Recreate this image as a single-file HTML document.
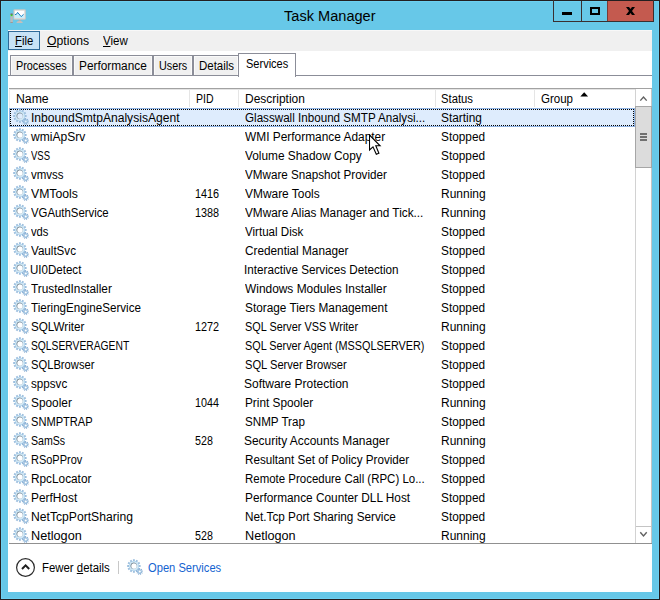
<!DOCTYPE html>
<html><head><meta charset="utf-8"><title>Task Manager</title>
<style>
*{box-sizing:border-box;margin:0;padding:0}
html,body{width:660px;height:600px;overflow:hidden}
body{background:#67c8e8;font-family:"Liberation Sans",sans-serif;font-size:12px;color:#000;position:relative}
.a{position:absolute}
.t{position:absolute;display:inline-block;white-space:nowrap;transform-origin:0 50%}
u{text-decoration:underline;text-underline-offset:1px;text-decoration-thickness:1px}
.tab{position:absolute;top:55px;height:20px;background:#f0f0f0;border:1px solid #8b8d98;border-bottom:none;box-shadow:inset 1px 1px 0 #fafafa,inset -1px 0 0 #fafafa}
.tab.act{top:53px;height:24px;background:#fff;box-shadow:none}
.vs{position:absolute;top:89px;width:1px;height:18px;background:#e5e5e5}
.g{position:absolute;left:13px;width:16px;height:16px}
</style></head><body>

<svg width="0" height="0" style="position:absolute">
<defs>
<radialGradient id="gg" cx="0.5" cy="0.5" r="0.5">
<stop offset="0.6" stop-color="#e3f4fc"/><stop offset="0.85" stop-color="#cbe7f6"/><stop offset="1" stop-color="#b3d5ee"/>
</radialGradient>
<linearGradient id="gr" x1="0" y1="0" x2="1" y2="1">
<stop offset="0" stop-color="#4c5761"/><stop offset="0.5" stop-color="#93a5b5"/><stop offset="1" stop-color="#e6f3fb"/>
</linearGradient>
</defs></svg>
<div class="a" style="left:0;top:0;width:660px;height:600px;border:1px solid #231f20"></div>
<div class="a" style="left:1px;top:1px;width:658px;height:598px;border:1px solid #6cd0f1"></div>
<svg class="a" style="left:9px;top:8px" width="18" height="16" viewBox="9 8 18 16">
<rect x="10.4" y="13.6" width="2.4" height="9.3" rx="0.8" fill="#bdbaba"/>
<rect x="10.6" y="13.6" width="2" height="1.2" fill="#5a4a5a"/>
<rect x="10.7" y="14.6" width="1.8" height="1.5" fill="#2fe01f"/>
<rect x="10.4" y="22" width="2.4" height="0.9" fill="#9d9390"/>
<rect x="18.6" y="19.4" width="2.2" height="2.2" fill="#b5b0ad"/>
<path d="M16.4 23 Q16.6 21.2 19 21.1 L20.4 21.1 Q22.6 21.2 22.8 23Z" fill="#c4bfbc"/>
<rect x="13.4" y="9.3" width="12.4" height="10.4" rx="1.3" fill="#cbc7c4"/>
<rect x="14.1" y="10" width="11" height="9" rx="0.8" fill="#ddd9d6"/>
<rect x="14.9" y="10.8" width="9.3" height="7.1" fill="#fff"/>
<path d="M14.9 14.6 L16.4 14.3 L17.6 12.4 L21.2 16.6 L23.5 14.4 L24.2 14.4 L24.2 17.9 L14.9 17.9Z" fill="#c6eefb"/>
<path d="M14.9 14.6 L16.4 14.3 L17.6 12.4 L21.2 16.6 L23.6 14.3" fill="none" stroke="#1b7fc2" stroke-width="1"/>
</svg>
<span class="t" style="left:283.64px;top:6px;line-height:20px;transform:scaleX(0.9407);font-size:15.5px">Task Manager</span>
<div class="a" style="left:553px;top:0;width:101px;height:22px;border:1px solid #3a2f30;border-top:none"></div>
<div class="a" style="left:581px;top:1px;width:1px;height:20px;background:#3a2f30"></div>
<div class="a" style="left:608px;top:1px;width:45px;height:20px;background:#c45a4f"></div>
<div class="a" style="left:607px;top:1px;width:1px;height:20px;background:#7a3a36"></div>
<div class="a" style="left:562px;top:12px;width:10px;height:3px;background:#000"></div>
<div class="a" style="left:590px;top:7px;width:10px;height:8px;border:2px solid #000"></div>
<svg class="a" style="left:625px;top:6px" width="11" height="10" viewBox="625 6 11 10"><path d="M626 7 L629 7 L630.5 9 L632 7 L635 7 L632 11 L635 15 L632 15 L630.5 13 L629 15 L626 15 L629 11Z" fill="#000"/></svg>

<div class="a" style="left:8px;top:30px;width:644px;height:562px;background:#fff"></div>
<div class="a" style="left:8px;top:30px;width:644px;height:21px;background:#f0f0f0"></div>
<div class="a" style="left:8px;top:30px;width:644px;height:1px;background:#f8f8f8"></div>
<div class="a" style="left:8px;top:31px;width:32px;height:19px;background:#c8e3f6;border:1px solid #2f6a98"></div>
<span class="t" style="left:15.18px;top:33px;line-height:17px;transform:scaleX(0.9425);"><u>F</u>ile</span>
<span class="t" style="left:47.15px;top:33px;line-height:17px;transform:scaleX(1.0169);"><u>O</u>ptions</span>
<span class="t" style="left:103.20px;top:33px;line-height:17px;transform:scaleX(0.9591);"><u>V</u>iew</span>
<div class="a" style="left:8px;top:75px;width:644px;height:1px;background:#8b8d98"></div>
<div class="tab" style="left:10px;width:63px"></div>
<span class="t" style="left:16.11px;top:57px;line-height:19px;transform:scaleX(0.9031);">Processes</span>
<div class="tab" style="left:73px;width:80px"></div>
<span class="t" style="left:79.44px;top:57px;line-height:19px;transform:scaleX(0.9864);">Performance</span>
<div class="tab" style="left:153px;width:40px"></div>
<span class="t" style="left:159.36px;top:57px;line-height:19px;transform:scaleX(0.8990);">Users</span>
<div class="tab" style="left:193px;width:46px"></div>
<span class="t" style="left:199.47px;top:57px;line-height:19px;transform:scaleX(0.9564);">Details</span>
<div class="tab act" style="left:238px;width:58px"></div>
<span class="t" style="left:246.27px;top:55px;line-height:19px;transform:scaleX(0.9180);">Services</span>
<div class="a" style="left:9px;top:88px;width:643px;height:1px;background:#a2a2a2"></div>
<div class="a" style="left:9px;top:89px;width:627px;height:1px;background:#e4e4e4"></div>
<div class="a" style="left:9px;top:543px;width:643px;height:1px;background:#909090"></div>
<div class="a" style="left:9px;top:89px;width:1px;height:19px;background:#ececec"></div>
<div class="a" style="left:9px;top:108px;width:1px;height:435px;background:#f7f7f7"></div>
<div class="vs" style="left:189px"></div>
<div class="vs" style="left:238px"></div>
<div class="vs" style="left:435px"></div>
<div class="vs" style="left:534px"></div>
<span class="t" style="left:15.51px;top:90px;line-height:19px;transform:scaleX(1.0209);">Name</span>
<span class="t" style="left:195.54px;top:90px;line-height:19px;transform:scaleX(0.8754);">PID</span>
<span class="t" style="left:245.43px;top:90px;line-height:19px;transform:scaleX(0.9973);">Description</span>
<span class="t" style="left:441.15px;top:90px;line-height:19px;transform:scaleX(0.9400);">Status</span>
<span class="t" style="left:541.42px;top:90px;line-height:19px;transform:scaleX(0.9589);">Group</span>
<svg class="a" style="left:580px;top:92px" width="9" height="5" viewBox="0 0 9 5"><path d="M0.3 4.4 L4.2 0.3 L8.1 4.4Z" fill="#000"/></svg>
<div class="a" style="left:9px;top:108px;width:626px;height:19px;background:#deecfd;border:1px solid #8fb3e3"></div>
<div class="a" style="left:10px;top:109px;width:624px;height:17px;border:1px dotted #000"></div>
<div class="a" style="left:8px;top:108px;width:627px;height:435px;overflow:hidden">
<svg class="g" style="left:5px;top:1px" viewBox="0 0 16 16"><path fill-rule="evenodd" d="M6.0 2.5 L5.9 0.3 L7.9 0.3 L7.8 2.5 L8.4 2.6 L9.4 0.7 L11.1 1.7 L9.9 3.5 L10.4 4.0 L12.2 2.8 L13.2 4.5 L11.3 5.5 L11.4 6.1 L13.6 6.0 L13.6 8.0 L11.4 7.9 L11.3 8.5 L13.2 9.5 L12.2 11.2 L10.4 10.0 L9.9 10.5 L11.1 12.3 L9.4 13.3 L8.4 11.4 L7.8 11.5 L7.9 13.7 L5.9 13.7 L6.0 11.5 L5.4 11.4 L4.4 13.3 L2.7 12.3 L3.9 10.5 L3.4 10.0 L1.6 11.2 L0.6 9.5 L2.5 8.5 L2.4 7.9 L0.2 8.0 L0.2 6.0 L2.4 6.1 L2.5 5.5 L0.6 4.5 L1.6 2.8 L3.4 4.0 L3.9 3.5 L2.7 1.7 L4.4 0.7 L5.4 2.6Z M10 7 A3.1 3.1 0 1 0 3.8 7 A3.1 3.1 0 1 0 10 7Z" fill="#9dbfde"/><path fill-rule="evenodd" d="M11.9 7 A5 5 0 1 0 1.9 7 A5 5 0 1 0 11.9 7Z M10 7 A3.1 3.1 0 1 0 3.8 7 A3.1 3.1 0 1 0 10 7Z" fill="url(#gg)"/><circle cx="6.9" cy="7" r="3.1" fill="none" stroke="url(#gr)" stroke-width="0.8"/><path fill-rule="evenodd" d="M12.3 10.5 L12.3 9.2 L13.1 9.2 L13.1 10.5 L13.7 10.8 L14.6 9.7 L15.2 10.3 L14.3 11.3 L14.7 11.9 L16.0 11.6 L16.1 12.4 L14.8 12.6 L14.7 13.3 L15.8 13.9 L15.4 14.6 L14.3 14.0 L13.8 14.4 L14.2 15.6 L13.5 15.9 L13.0 14.7 L12.4 14.7 L11.9 15.9 L11.2 15.6 L11.6 14.4 L11.1 14.0 L10.0 14.6 L9.6 13.9 L10.7 13.3 L10.6 12.6 L9.3 12.4 L9.4 11.6 L10.7 11.9 L11.1 11.3 L10.2 10.3 L10.8 9.7 L11.7 10.8Z M13.95 12.6 A1.25 1.25 0 1 0 11.45 12.6 A1.25 1.25 0 1 0 13.95 12.6Z" fill="#7ba3cc"/><path fill-rule="evenodd" d="M14.9 12.6 A2.2 2.2 0 1 0 10.5 12.6 A2.2 2.2 0 1 0 14.9 12.6Z M13.95 12.6 A1.25 1.25 0 1 0 11.45 12.6 A1.25 1.25 0 1 0 13.95 12.6Z" fill="#a9cbe6"/></svg>
<span class="t" style="left:23.27px;top:1px;line-height:19px;transform:scaleX(1.0075)">InboundSmtpAnalysisAgent</span>
<span class="t" style="left:236.92px;top:1px;line-height:19px;transform:scaleX(0.9698)">Glasswall Inbound SMTP Analysi...</span>
<span class="t" style="left:433.10px;top:1px;line-height:19px;transform:scaleX(0.9882)">Starting</span>
<svg class="g" style="left:5px;top:20px" viewBox="0 0 16 16"><path fill-rule="evenodd" d="M6.0 2.5 L5.9 0.3 L7.9 0.3 L7.8 2.5 L8.4 2.6 L9.4 0.7 L11.1 1.7 L9.9 3.5 L10.4 4.0 L12.2 2.8 L13.2 4.5 L11.3 5.5 L11.4 6.1 L13.6 6.0 L13.6 8.0 L11.4 7.9 L11.3 8.5 L13.2 9.5 L12.2 11.2 L10.4 10.0 L9.9 10.5 L11.1 12.3 L9.4 13.3 L8.4 11.4 L7.8 11.5 L7.9 13.7 L5.9 13.7 L6.0 11.5 L5.4 11.4 L4.4 13.3 L2.7 12.3 L3.9 10.5 L3.4 10.0 L1.6 11.2 L0.6 9.5 L2.5 8.5 L2.4 7.9 L0.2 8.0 L0.2 6.0 L2.4 6.1 L2.5 5.5 L0.6 4.5 L1.6 2.8 L3.4 4.0 L3.9 3.5 L2.7 1.7 L4.4 0.7 L5.4 2.6Z M10 7 A3.1 3.1 0 1 0 3.8 7 A3.1 3.1 0 1 0 10 7Z" fill="#9dbfde"/><path fill-rule="evenodd" d="M11.9 7 A5 5 0 1 0 1.9 7 A5 5 0 1 0 11.9 7Z M10 7 A3.1 3.1 0 1 0 3.8 7 A3.1 3.1 0 1 0 10 7Z" fill="url(#gg)"/><circle cx="6.9" cy="7" r="3.1" fill="none" stroke="url(#gr)" stroke-width="0.8"/><path fill-rule="evenodd" d="M12.3 10.5 L12.3 9.2 L13.1 9.2 L13.1 10.5 L13.7 10.8 L14.6 9.7 L15.2 10.3 L14.3 11.3 L14.7 11.9 L16.0 11.6 L16.1 12.4 L14.8 12.6 L14.7 13.3 L15.8 13.9 L15.4 14.6 L14.3 14.0 L13.8 14.4 L14.2 15.6 L13.5 15.9 L13.0 14.7 L12.4 14.7 L11.9 15.9 L11.2 15.6 L11.6 14.4 L11.1 14.0 L10.0 14.6 L9.6 13.9 L10.7 13.3 L10.6 12.6 L9.3 12.4 L9.4 11.6 L10.7 11.9 L11.1 11.3 L10.2 10.3 L10.8 9.7 L11.7 10.8Z M13.95 12.6 A1.25 1.25 0 1 0 11.45 12.6 A1.25 1.25 0 1 0 13.95 12.6Z" fill="#7ba3cc"/><path fill-rule="evenodd" d="M14.9 12.6 A2.2 2.2 0 1 0 10.5 12.6 A2.2 2.2 0 1 0 14.9 12.6Z M13.95 12.6 A1.25 1.25 0 1 0 11.45 12.6 A1.25 1.25 0 1 0 13.95 12.6Z" fill="#a9cbe6"/></svg>
<span class="t" style="left:23.35px;top:20px;line-height:19px;transform:scaleX(1.0050)">wmiApSrv</span>
<span class="t" style="left:237.34px;top:20px;line-height:19px;transform:scaleX(0.9915)">WMI Performance Adapter</span>
<span class="t" style="left:433.11px;top:20px;line-height:19px;transform:scaleX(0.9846)">Stopped</span>
<svg class="g" style="left:5px;top:39px" viewBox="0 0 16 16"><path fill-rule="evenodd" d="M6.0 2.5 L5.9 0.3 L7.9 0.3 L7.8 2.5 L8.4 2.6 L9.4 0.7 L11.1 1.7 L9.9 3.5 L10.4 4.0 L12.2 2.8 L13.2 4.5 L11.3 5.5 L11.4 6.1 L13.6 6.0 L13.6 8.0 L11.4 7.9 L11.3 8.5 L13.2 9.5 L12.2 11.2 L10.4 10.0 L9.9 10.5 L11.1 12.3 L9.4 13.3 L8.4 11.4 L7.8 11.5 L7.9 13.7 L5.9 13.7 L6.0 11.5 L5.4 11.4 L4.4 13.3 L2.7 12.3 L3.9 10.5 L3.4 10.0 L1.6 11.2 L0.6 9.5 L2.5 8.5 L2.4 7.9 L0.2 8.0 L0.2 6.0 L2.4 6.1 L2.5 5.5 L0.6 4.5 L1.6 2.8 L3.4 4.0 L3.9 3.5 L2.7 1.7 L4.4 0.7 L5.4 2.6Z M10 7 A3.1 3.1 0 1 0 3.8 7 A3.1 3.1 0 1 0 10 7Z" fill="#9dbfde"/><path fill-rule="evenodd" d="M11.9 7 A5 5 0 1 0 1.9 7 A5 5 0 1 0 11.9 7Z M10 7 A3.1 3.1 0 1 0 3.8 7 A3.1 3.1 0 1 0 10 7Z" fill="url(#gg)"/><circle cx="6.9" cy="7" r="3.1" fill="none" stroke="url(#gr)" stroke-width="0.8"/><path fill-rule="evenodd" d="M12.3 10.5 L12.3 9.2 L13.1 9.2 L13.1 10.5 L13.7 10.8 L14.6 9.7 L15.2 10.3 L14.3 11.3 L14.7 11.9 L16.0 11.6 L16.1 12.4 L14.8 12.6 L14.7 13.3 L15.8 13.9 L15.4 14.6 L14.3 14.0 L13.8 14.4 L14.2 15.6 L13.5 15.9 L13.0 14.7 L12.4 14.7 L11.9 15.9 L11.2 15.6 L11.6 14.4 L11.1 14.0 L10.0 14.6 L9.6 13.9 L10.7 13.3 L10.6 12.6 L9.3 12.4 L9.4 11.6 L10.7 11.9 L11.1 11.3 L10.2 10.3 L10.8 9.7 L11.7 10.8Z M13.95 12.6 A1.25 1.25 0 1 0 11.45 12.6 A1.25 1.25 0 1 0 13.95 12.6Z" fill="#7ba3cc"/><path fill-rule="evenodd" d="M14.9 12.6 A2.2 2.2 0 1 0 10.5 12.6 A2.2 2.2 0 1 0 14.9 12.6Z M13.95 12.6 A1.25 1.25 0 1 0 11.45 12.6 A1.25 1.25 0 1 0 13.95 12.6Z" fill="#a9cbe6"/></svg>
<span class="t" style="left:23.33px;top:39px;line-height:19px;transform:scaleX(0.7913)">VSS</span>
<span class="t" style="left:237.29px;top:39px;line-height:19px;transform:scaleX(0.9884)">Volume Shadow Copy</span>
<span class="t" style="left:433.11px;top:39px;line-height:19px;transform:scaleX(0.9846)">Stopped</span>
<svg class="g" style="left:5px;top:58px" viewBox="0 0 16 16"><path fill-rule="evenodd" d="M6.0 2.5 L5.9 0.3 L7.9 0.3 L7.8 2.5 L8.4 2.6 L9.4 0.7 L11.1 1.7 L9.9 3.5 L10.4 4.0 L12.2 2.8 L13.2 4.5 L11.3 5.5 L11.4 6.1 L13.6 6.0 L13.6 8.0 L11.4 7.9 L11.3 8.5 L13.2 9.5 L12.2 11.2 L10.4 10.0 L9.9 10.5 L11.1 12.3 L9.4 13.3 L8.4 11.4 L7.8 11.5 L7.9 13.7 L5.9 13.7 L6.0 11.5 L5.4 11.4 L4.4 13.3 L2.7 12.3 L3.9 10.5 L3.4 10.0 L1.6 11.2 L0.6 9.5 L2.5 8.5 L2.4 7.9 L0.2 8.0 L0.2 6.0 L2.4 6.1 L2.5 5.5 L0.6 4.5 L1.6 2.8 L3.4 4.0 L3.9 3.5 L2.7 1.7 L4.4 0.7 L5.4 2.6Z M10 7 A3.1 3.1 0 1 0 3.8 7 A3.1 3.1 0 1 0 10 7Z" fill="#9dbfde"/><path fill-rule="evenodd" d="M11.9 7 A5 5 0 1 0 1.9 7 A5 5 0 1 0 11.9 7Z M10 7 A3.1 3.1 0 1 0 3.8 7 A3.1 3.1 0 1 0 10 7Z" fill="url(#gg)"/><circle cx="6.9" cy="7" r="3.1" fill="none" stroke="url(#gr)" stroke-width="0.8"/><path fill-rule="evenodd" d="M12.3 10.5 L12.3 9.2 L13.1 9.2 L13.1 10.5 L13.7 10.8 L14.6 9.7 L15.2 10.3 L14.3 11.3 L14.7 11.9 L16.0 11.6 L16.1 12.4 L14.8 12.6 L14.7 13.3 L15.8 13.9 L15.4 14.6 L14.3 14.0 L13.8 14.4 L14.2 15.6 L13.5 15.9 L13.0 14.7 L12.4 14.7 L11.9 15.9 L11.2 15.6 L11.6 14.4 L11.1 14.0 L10.0 14.6 L9.6 13.9 L10.7 13.3 L10.6 12.6 L9.3 12.4 L9.4 11.6 L10.7 11.9 L11.1 11.3 L10.2 10.3 L10.8 9.7 L11.7 10.8Z M13.95 12.6 A1.25 1.25 0 1 0 11.45 12.6 A1.25 1.25 0 1 0 13.95 12.6Z" fill="#7ba3cc"/><path fill-rule="evenodd" d="M14.9 12.6 A2.2 2.2 0 1 0 10.5 12.6 A2.2 2.2 0 1 0 14.9 12.6Z M13.95 12.6 A1.25 1.25 0 1 0 11.45 12.6 A1.25 1.25 0 1 0 13.95 12.6Z" fill="#a9cbe6"/></svg>
<span class="t" style="left:23.31px;top:58px;line-height:19px;transform:scaleX(0.9591)">vmvss</span>
<span class="t" style="left:237.30px;top:58px;line-height:19px;transform:scaleX(0.9713)">VMware Snapshot Provider</span>
<span class="t" style="left:433.11px;top:58px;line-height:19px;transform:scaleX(0.9846)">Stopped</span>
<svg class="g" style="left:5px;top:77px" viewBox="0 0 16 16"><path fill-rule="evenodd" d="M6.0 2.5 L5.9 0.3 L7.9 0.3 L7.8 2.5 L8.4 2.6 L9.4 0.7 L11.1 1.7 L9.9 3.5 L10.4 4.0 L12.2 2.8 L13.2 4.5 L11.3 5.5 L11.4 6.1 L13.6 6.0 L13.6 8.0 L11.4 7.9 L11.3 8.5 L13.2 9.5 L12.2 11.2 L10.4 10.0 L9.9 10.5 L11.1 12.3 L9.4 13.3 L8.4 11.4 L7.8 11.5 L7.9 13.7 L5.9 13.7 L6.0 11.5 L5.4 11.4 L4.4 13.3 L2.7 12.3 L3.9 10.5 L3.4 10.0 L1.6 11.2 L0.6 9.5 L2.5 8.5 L2.4 7.9 L0.2 8.0 L0.2 6.0 L2.4 6.1 L2.5 5.5 L0.6 4.5 L1.6 2.8 L3.4 4.0 L3.9 3.5 L2.7 1.7 L4.4 0.7 L5.4 2.6Z M10 7 A3.1 3.1 0 1 0 3.8 7 A3.1 3.1 0 1 0 10 7Z" fill="#9dbfde"/><path fill-rule="evenodd" d="M11.9 7 A5 5 0 1 0 1.9 7 A5 5 0 1 0 11.9 7Z M10 7 A3.1 3.1 0 1 0 3.8 7 A3.1 3.1 0 1 0 10 7Z" fill="url(#gg)"/><circle cx="6.9" cy="7" r="3.1" fill="none" stroke="url(#gr)" stroke-width="0.8"/><path fill-rule="evenodd" d="M12.3 10.5 L12.3 9.2 L13.1 9.2 L13.1 10.5 L13.7 10.8 L14.6 9.7 L15.2 10.3 L14.3 11.3 L14.7 11.9 L16.0 11.6 L16.1 12.4 L14.8 12.6 L14.7 13.3 L15.8 13.9 L15.4 14.6 L14.3 14.0 L13.8 14.4 L14.2 15.6 L13.5 15.9 L13.0 14.7 L12.4 14.7 L11.9 15.9 L11.2 15.6 L11.6 14.4 L11.1 14.0 L10.0 14.6 L9.6 13.9 L10.7 13.3 L10.6 12.6 L9.3 12.4 L9.4 11.6 L10.7 11.9 L11.1 11.3 L10.2 10.3 L10.8 9.7 L11.7 10.8Z M13.95 12.6 A1.25 1.25 0 1 0 11.45 12.6 A1.25 1.25 0 1 0 13.95 12.6Z" fill="#7ba3cc"/><path fill-rule="evenodd" d="M14.9 12.6 A2.2 2.2 0 1 0 10.5 12.6 A2.2 2.2 0 1 0 14.9 12.6Z M13.95 12.6 A1.25 1.25 0 1 0 11.45 12.6 A1.25 1.25 0 1 0 13.95 12.6Z" fill="#a9cbe6"/></svg>
<span class="t" style="left:23.29px;top:77px;line-height:19px;transform:scaleX(1.0205)">VMTools</span>
<span class="t" style="left:186.96px;top:77px;line-height:19px;transform:scaleX(0.9044)">1416</span>
<span class="t" style="left:237.29px;top:77px;line-height:19px;transform:scaleX(0.9938)">VMware Tools</span>
<span class="t" style="left:433.23px;top:77px;line-height:19px;transform:scaleX(0.9995)">Running</span>
<svg class="g" style="left:5px;top:96px" viewBox="0 0 16 16"><path fill-rule="evenodd" d="M6.0 2.5 L5.9 0.3 L7.9 0.3 L7.8 2.5 L8.4 2.6 L9.4 0.7 L11.1 1.7 L9.9 3.5 L10.4 4.0 L12.2 2.8 L13.2 4.5 L11.3 5.5 L11.4 6.1 L13.6 6.0 L13.6 8.0 L11.4 7.9 L11.3 8.5 L13.2 9.5 L12.2 11.2 L10.4 10.0 L9.9 10.5 L11.1 12.3 L9.4 13.3 L8.4 11.4 L7.8 11.5 L7.9 13.7 L5.9 13.7 L6.0 11.5 L5.4 11.4 L4.4 13.3 L2.7 12.3 L3.9 10.5 L3.4 10.0 L1.6 11.2 L0.6 9.5 L2.5 8.5 L2.4 7.9 L0.2 8.0 L0.2 6.0 L2.4 6.1 L2.5 5.5 L0.6 4.5 L1.6 2.8 L3.4 4.0 L3.9 3.5 L2.7 1.7 L4.4 0.7 L5.4 2.6Z M10 7 A3.1 3.1 0 1 0 3.8 7 A3.1 3.1 0 1 0 10 7Z" fill="#9dbfde"/><path fill-rule="evenodd" d="M11.9 7 A5 5 0 1 0 1.9 7 A5 5 0 1 0 11.9 7Z M10 7 A3.1 3.1 0 1 0 3.8 7 A3.1 3.1 0 1 0 10 7Z" fill="url(#gg)"/><circle cx="6.9" cy="7" r="3.1" fill="none" stroke="url(#gr)" stroke-width="0.8"/><path fill-rule="evenodd" d="M12.3 10.5 L12.3 9.2 L13.1 9.2 L13.1 10.5 L13.7 10.8 L14.6 9.7 L15.2 10.3 L14.3 11.3 L14.7 11.9 L16.0 11.6 L16.1 12.4 L14.8 12.6 L14.7 13.3 L15.8 13.9 L15.4 14.6 L14.3 14.0 L13.8 14.4 L14.2 15.6 L13.5 15.9 L13.0 14.7 L12.4 14.7 L11.9 15.9 L11.2 15.6 L11.6 14.4 L11.1 14.0 L10.0 14.6 L9.6 13.9 L10.7 13.3 L10.6 12.6 L9.3 12.4 L9.4 11.6 L10.7 11.9 L11.1 11.3 L10.2 10.3 L10.8 9.7 L11.7 10.8Z M13.95 12.6 A1.25 1.25 0 1 0 11.45 12.6 A1.25 1.25 0 1 0 13.95 12.6Z" fill="#7ba3cc"/><path fill-rule="evenodd" d="M14.9 12.6 A2.2 2.2 0 1 0 10.5 12.6 A2.2 2.2 0 1 0 14.9 12.6Z M13.95 12.6 A1.25 1.25 0 1 0 11.45 12.6 A1.25 1.25 0 1 0 13.95 12.6Z" fill="#a9cbe6"/></svg>
<span class="t" style="left:23.30px;top:96px;line-height:19px;transform:scaleX(0.9470)">VGAuthService</span>
<span class="t" style="left:186.96px;top:96px;line-height:19px;transform:scaleX(0.9030)">1388</span>
<span class="t" style="left:237.29px;top:96px;line-height:19px;transform:scaleX(0.9834)">VMware Alias Manager and Tick...</span>
<span class="t" style="left:433.23px;top:96px;line-height:19px;transform:scaleX(0.9995)">Running</span>
<svg class="g" style="left:5px;top:115px" viewBox="0 0 16 16"><path fill-rule="evenodd" d="M6.0 2.5 L5.9 0.3 L7.9 0.3 L7.8 2.5 L8.4 2.6 L9.4 0.7 L11.1 1.7 L9.9 3.5 L10.4 4.0 L12.2 2.8 L13.2 4.5 L11.3 5.5 L11.4 6.1 L13.6 6.0 L13.6 8.0 L11.4 7.9 L11.3 8.5 L13.2 9.5 L12.2 11.2 L10.4 10.0 L9.9 10.5 L11.1 12.3 L9.4 13.3 L8.4 11.4 L7.8 11.5 L7.9 13.7 L5.9 13.7 L6.0 11.5 L5.4 11.4 L4.4 13.3 L2.7 12.3 L3.9 10.5 L3.4 10.0 L1.6 11.2 L0.6 9.5 L2.5 8.5 L2.4 7.9 L0.2 8.0 L0.2 6.0 L2.4 6.1 L2.5 5.5 L0.6 4.5 L1.6 2.8 L3.4 4.0 L3.9 3.5 L2.7 1.7 L4.4 0.7 L5.4 2.6Z M10 7 A3.1 3.1 0 1 0 3.8 7 A3.1 3.1 0 1 0 10 7Z" fill="#9dbfde"/><path fill-rule="evenodd" d="M11.9 7 A5 5 0 1 0 1.9 7 A5 5 0 1 0 11.9 7Z M10 7 A3.1 3.1 0 1 0 3.8 7 A3.1 3.1 0 1 0 10 7Z" fill="url(#gg)"/><circle cx="6.9" cy="7" r="3.1" fill="none" stroke="url(#gr)" stroke-width="0.8"/><path fill-rule="evenodd" d="M12.3 10.5 L12.3 9.2 L13.1 9.2 L13.1 10.5 L13.7 10.8 L14.6 9.7 L15.2 10.3 L14.3 11.3 L14.7 11.9 L16.0 11.6 L16.1 12.4 L14.8 12.6 L14.7 13.3 L15.8 13.9 L15.4 14.6 L14.3 14.0 L13.8 14.4 L14.2 15.6 L13.5 15.9 L13.0 14.7 L12.4 14.7 L11.9 15.9 L11.2 15.6 L11.6 14.4 L11.1 14.0 L10.0 14.6 L9.6 13.9 L10.7 13.3 L10.6 12.6 L9.3 12.4 L9.4 11.6 L10.7 11.9 L11.1 11.3 L10.2 10.3 L10.8 9.7 L11.7 10.8Z M13.95 12.6 A1.25 1.25 0 1 0 11.45 12.6 A1.25 1.25 0 1 0 13.95 12.6Z" fill="#7ba3cc"/><path fill-rule="evenodd" d="M14.9 12.6 A2.2 2.2 0 1 0 10.5 12.6 A2.2 2.2 0 1 0 14.9 12.6Z M13.95 12.6 A1.25 1.25 0 1 0 11.45 12.6 A1.25 1.25 0 1 0 13.95 12.6Z" fill="#a9cbe6"/></svg>
<span class="t" style="left:23.31px;top:115px;line-height:19px;transform:scaleX(0.9336)">vds</span>
<span class="t" style="left:237.30px;top:115px;line-height:19px;transform:scaleX(0.9658)">Virtual Disk</span>
<span class="t" style="left:433.11px;top:115px;line-height:19px;transform:scaleX(0.9846)">Stopped</span>
<svg class="g" style="left:5px;top:134px" viewBox="0 0 16 16"><path fill-rule="evenodd" d="M6.0 2.5 L5.9 0.3 L7.9 0.3 L7.8 2.5 L8.4 2.6 L9.4 0.7 L11.1 1.7 L9.9 3.5 L10.4 4.0 L12.2 2.8 L13.2 4.5 L11.3 5.5 L11.4 6.1 L13.6 6.0 L13.6 8.0 L11.4 7.9 L11.3 8.5 L13.2 9.5 L12.2 11.2 L10.4 10.0 L9.9 10.5 L11.1 12.3 L9.4 13.3 L8.4 11.4 L7.8 11.5 L7.9 13.7 L5.9 13.7 L6.0 11.5 L5.4 11.4 L4.4 13.3 L2.7 12.3 L3.9 10.5 L3.4 10.0 L1.6 11.2 L0.6 9.5 L2.5 8.5 L2.4 7.9 L0.2 8.0 L0.2 6.0 L2.4 6.1 L2.5 5.5 L0.6 4.5 L1.6 2.8 L3.4 4.0 L3.9 3.5 L2.7 1.7 L4.4 0.7 L5.4 2.6Z M10 7 A3.1 3.1 0 1 0 3.8 7 A3.1 3.1 0 1 0 10 7Z" fill="#9dbfde"/><path fill-rule="evenodd" d="M11.9 7 A5 5 0 1 0 1.9 7 A5 5 0 1 0 11.9 7Z M10 7 A3.1 3.1 0 1 0 3.8 7 A3.1 3.1 0 1 0 10 7Z" fill="url(#gg)"/><circle cx="6.9" cy="7" r="3.1" fill="none" stroke="url(#gr)" stroke-width="0.8"/><path fill-rule="evenodd" d="M12.3 10.5 L12.3 9.2 L13.1 9.2 L13.1 10.5 L13.7 10.8 L14.6 9.7 L15.2 10.3 L14.3 11.3 L14.7 11.9 L16.0 11.6 L16.1 12.4 L14.8 12.6 L14.7 13.3 L15.8 13.9 L15.4 14.6 L14.3 14.0 L13.8 14.4 L14.2 15.6 L13.5 15.9 L13.0 14.7 L12.4 14.7 L11.9 15.9 L11.2 15.6 L11.6 14.4 L11.1 14.0 L10.0 14.6 L9.6 13.9 L10.7 13.3 L10.6 12.6 L9.3 12.4 L9.4 11.6 L10.7 11.9 L11.1 11.3 L10.2 10.3 L10.8 9.7 L11.7 10.8Z M13.95 12.6 A1.25 1.25 0 1 0 11.45 12.6 A1.25 1.25 0 1 0 13.95 12.6Z" fill="#7ba3cc"/><path fill-rule="evenodd" d="M14.9 12.6 A2.2 2.2 0 1 0 10.5 12.6 A2.2 2.2 0 1 0 14.9 12.6Z M13.95 12.6 A1.25 1.25 0 1 0 11.45 12.6 A1.25 1.25 0 1 0 13.95 12.6Z" fill="#a9cbe6"/></svg>
<span class="t" style="left:23.30px;top:134px;line-height:19px;transform:scaleX(0.9683)">VaultSvc</span>
<span class="t" style="left:236.91px;top:134px;line-height:19px;transform:scaleX(0.9824)">Credential Manager</span>
<span class="t" style="left:433.11px;top:134px;line-height:19px;transform:scaleX(0.9846)">Stopped</span>
<svg class="g" style="left:5px;top:153px" viewBox="0 0 16 16"><path fill-rule="evenodd" d="M6.0 2.5 L5.9 0.3 L7.9 0.3 L7.8 2.5 L8.4 2.6 L9.4 0.7 L11.1 1.7 L9.9 3.5 L10.4 4.0 L12.2 2.8 L13.2 4.5 L11.3 5.5 L11.4 6.1 L13.6 6.0 L13.6 8.0 L11.4 7.9 L11.3 8.5 L13.2 9.5 L12.2 11.2 L10.4 10.0 L9.9 10.5 L11.1 12.3 L9.4 13.3 L8.4 11.4 L7.8 11.5 L7.9 13.7 L5.9 13.7 L6.0 11.5 L5.4 11.4 L4.4 13.3 L2.7 12.3 L3.9 10.5 L3.4 10.0 L1.6 11.2 L0.6 9.5 L2.5 8.5 L2.4 7.9 L0.2 8.0 L0.2 6.0 L2.4 6.1 L2.5 5.5 L0.6 4.5 L1.6 2.8 L3.4 4.0 L3.9 3.5 L2.7 1.7 L4.4 0.7 L5.4 2.6Z M10 7 A3.1 3.1 0 1 0 3.8 7 A3.1 3.1 0 1 0 10 7Z" fill="#9dbfde"/><path fill-rule="evenodd" d="M11.9 7 A5 5 0 1 0 1.9 7 A5 5 0 1 0 11.9 7Z M10 7 A3.1 3.1 0 1 0 3.8 7 A3.1 3.1 0 1 0 10 7Z" fill="url(#gg)"/><circle cx="6.9" cy="7" r="3.1" fill="none" stroke="url(#gr)" stroke-width="0.8"/><path fill-rule="evenodd" d="M12.3 10.5 L12.3 9.2 L13.1 9.2 L13.1 10.5 L13.7 10.8 L14.6 9.7 L15.2 10.3 L14.3 11.3 L14.7 11.9 L16.0 11.6 L16.1 12.4 L14.8 12.6 L14.7 13.3 L15.8 13.9 L15.4 14.6 L14.3 14.0 L13.8 14.4 L14.2 15.6 L13.5 15.9 L13.0 14.7 L12.4 14.7 L11.9 15.9 L11.2 15.6 L11.6 14.4 L11.1 14.0 L10.0 14.6 L9.6 13.9 L10.7 13.3 L10.6 12.6 L9.3 12.4 L9.4 11.6 L10.7 11.9 L11.1 11.3 L10.2 10.3 L10.8 9.7 L11.7 10.8Z M13.95 12.6 A1.25 1.25 0 1 0 11.45 12.6 A1.25 1.25 0 1 0 13.95 12.6Z" fill="#7ba3cc"/><path fill-rule="evenodd" d="M14.9 12.6 A2.2 2.2 0 1 0 10.5 12.6 A2.2 2.2 0 1 0 14.9 12.6Z M13.95 12.6 A1.25 1.25 0 1 0 11.45 12.6 A1.25 1.25 0 1 0 13.95 12.6Z" fill="#a9cbe6"/></svg>
<span class="t" style="left:22.49px;top:153px;line-height:19px;transform:scaleX(0.9623)">UI0Detect</span>
<span class="t" style="left:236.41px;top:153px;line-height:19px;transform:scaleX(0.9740)">Interactive Services Detection</span>
<span class="t" style="left:433.11px;top:153px;line-height:19px;transform:scaleX(0.9846)">Stopped</span>
<svg class="g" style="left:5px;top:172px" viewBox="0 0 16 16"><path fill-rule="evenodd" d="M6.0 2.5 L5.9 0.3 L7.9 0.3 L7.8 2.5 L8.4 2.6 L9.4 0.7 L11.1 1.7 L9.9 3.5 L10.4 4.0 L12.2 2.8 L13.2 4.5 L11.3 5.5 L11.4 6.1 L13.6 6.0 L13.6 8.0 L11.4 7.9 L11.3 8.5 L13.2 9.5 L12.2 11.2 L10.4 10.0 L9.9 10.5 L11.1 12.3 L9.4 13.3 L8.4 11.4 L7.8 11.5 L7.9 13.7 L5.9 13.7 L6.0 11.5 L5.4 11.4 L4.4 13.3 L2.7 12.3 L3.9 10.5 L3.4 10.0 L1.6 11.2 L0.6 9.5 L2.5 8.5 L2.4 7.9 L0.2 8.0 L0.2 6.0 L2.4 6.1 L2.5 5.5 L0.6 4.5 L1.6 2.8 L3.4 4.0 L3.9 3.5 L2.7 1.7 L4.4 0.7 L5.4 2.6Z M10 7 A3.1 3.1 0 1 0 3.8 7 A3.1 3.1 0 1 0 10 7Z" fill="#9dbfde"/><path fill-rule="evenodd" d="M11.9 7 A5 5 0 1 0 1.9 7 A5 5 0 1 0 11.9 7Z M10 7 A3.1 3.1 0 1 0 3.8 7 A3.1 3.1 0 1 0 10 7Z" fill="url(#gg)"/><circle cx="6.9" cy="7" r="3.1" fill="none" stroke="url(#gr)" stroke-width="0.8"/><path fill-rule="evenodd" d="M12.3 10.5 L12.3 9.2 L13.1 9.2 L13.1 10.5 L13.7 10.8 L14.6 9.7 L15.2 10.3 L14.3 11.3 L14.7 11.9 L16.0 11.6 L16.1 12.4 L14.8 12.6 L14.7 13.3 L15.8 13.9 L15.4 14.6 L14.3 14.0 L13.8 14.4 L14.2 15.6 L13.5 15.9 L13.0 14.7 L12.4 14.7 L11.9 15.9 L11.2 15.6 L11.6 14.4 L11.1 14.0 L10.0 14.6 L9.6 13.9 L10.7 13.3 L10.6 12.6 L9.3 12.4 L9.4 11.6 L10.7 11.9 L11.1 11.3 L10.2 10.3 L10.8 9.7 L11.7 10.8Z M13.95 12.6 A1.25 1.25 0 1 0 11.45 12.6 A1.25 1.25 0 1 0 13.95 12.6Z" fill="#7ba3cc"/><path fill-rule="evenodd" d="M14.9 12.6 A2.2 2.2 0 1 0 10.5 12.6 A2.2 2.2 0 1 0 14.9 12.6Z M13.95 12.6 A1.25 1.25 0 1 0 11.45 12.6 A1.25 1.25 0 1 0 13.95 12.6Z" fill="#a9cbe6"/></svg>
<span class="t" style="left:23.29px;top:172px;line-height:19px;transform:scaleX(0.9828)">TrustedInstaller</span>
<span class="t" style="left:237.34px;top:172px;line-height:19px;transform:scaleX(0.9926)">Windows Modules Installer</span>
<span class="t" style="left:433.11px;top:172px;line-height:19px;transform:scaleX(0.9846)">Stopped</span>
<svg class="g" style="left:5px;top:191px" viewBox="0 0 16 16"><path fill-rule="evenodd" d="M6.0 2.5 L5.9 0.3 L7.9 0.3 L7.8 2.5 L8.4 2.6 L9.4 0.7 L11.1 1.7 L9.9 3.5 L10.4 4.0 L12.2 2.8 L13.2 4.5 L11.3 5.5 L11.4 6.1 L13.6 6.0 L13.6 8.0 L11.4 7.9 L11.3 8.5 L13.2 9.5 L12.2 11.2 L10.4 10.0 L9.9 10.5 L11.1 12.3 L9.4 13.3 L8.4 11.4 L7.8 11.5 L7.9 13.7 L5.9 13.7 L6.0 11.5 L5.4 11.4 L4.4 13.3 L2.7 12.3 L3.9 10.5 L3.4 10.0 L1.6 11.2 L0.6 9.5 L2.5 8.5 L2.4 7.9 L0.2 8.0 L0.2 6.0 L2.4 6.1 L2.5 5.5 L0.6 4.5 L1.6 2.8 L3.4 4.0 L3.9 3.5 L2.7 1.7 L4.4 0.7 L5.4 2.6Z M10 7 A3.1 3.1 0 1 0 3.8 7 A3.1 3.1 0 1 0 10 7Z" fill="#9dbfde"/><path fill-rule="evenodd" d="M11.9 7 A5 5 0 1 0 1.9 7 A5 5 0 1 0 11.9 7Z M10 7 A3.1 3.1 0 1 0 3.8 7 A3.1 3.1 0 1 0 10 7Z" fill="url(#gg)"/><circle cx="6.9" cy="7" r="3.1" fill="none" stroke="url(#gr)" stroke-width="0.8"/><path fill-rule="evenodd" d="M12.3 10.5 L12.3 9.2 L13.1 9.2 L13.1 10.5 L13.7 10.8 L14.6 9.7 L15.2 10.3 L14.3 11.3 L14.7 11.9 L16.0 11.6 L16.1 12.4 L14.8 12.6 L14.7 13.3 L15.8 13.9 L15.4 14.6 L14.3 14.0 L13.8 14.4 L14.2 15.6 L13.5 15.9 L13.0 14.7 L12.4 14.7 L11.9 15.9 L11.2 15.6 L11.6 14.4 L11.1 14.0 L10.0 14.6 L9.6 13.9 L10.7 13.3 L10.6 12.6 L9.3 12.4 L9.4 11.6 L10.7 11.9 L11.1 11.3 L10.2 10.3 L10.8 9.7 L11.7 10.8Z M13.95 12.6 A1.25 1.25 0 1 0 11.45 12.6 A1.25 1.25 0 1 0 13.95 12.6Z" fill="#7ba3cc"/><path fill-rule="evenodd" d="M14.9 12.6 A2.2 2.2 0 1 0 10.5 12.6 A2.2 2.2 0 1 0 14.9 12.6Z M13.95 12.6 A1.25 1.25 0 1 0 11.45 12.6 A1.25 1.25 0 1 0 13.95 12.6Z" fill="#a9cbe6"/></svg>
<span class="t" style="left:23.30px;top:191px;line-height:19px;transform:scaleX(0.9675)">TieringEngineService</span>
<span class="t" style="left:236.51px;top:191px;line-height:19px;transform:scaleX(0.9840)">Storage Tiers Management</span>
<span class="t" style="left:433.11px;top:191px;line-height:19px;transform:scaleX(0.9846)">Stopped</span>
<svg class="g" style="left:5px;top:210px" viewBox="0 0 16 16"><path fill-rule="evenodd" d="M6.0 2.5 L5.9 0.3 L7.9 0.3 L7.8 2.5 L8.4 2.6 L9.4 0.7 L11.1 1.7 L9.9 3.5 L10.4 4.0 L12.2 2.8 L13.2 4.5 L11.3 5.5 L11.4 6.1 L13.6 6.0 L13.6 8.0 L11.4 7.9 L11.3 8.5 L13.2 9.5 L12.2 11.2 L10.4 10.0 L9.9 10.5 L11.1 12.3 L9.4 13.3 L8.4 11.4 L7.8 11.5 L7.9 13.7 L5.9 13.7 L6.0 11.5 L5.4 11.4 L4.4 13.3 L2.7 12.3 L3.9 10.5 L3.4 10.0 L1.6 11.2 L0.6 9.5 L2.5 8.5 L2.4 7.9 L0.2 8.0 L0.2 6.0 L2.4 6.1 L2.5 5.5 L0.6 4.5 L1.6 2.8 L3.4 4.0 L3.9 3.5 L2.7 1.7 L4.4 0.7 L5.4 2.6Z M10 7 A3.1 3.1 0 1 0 3.8 7 A3.1 3.1 0 1 0 10 7Z" fill="#9dbfde"/><path fill-rule="evenodd" d="M11.9 7 A5 5 0 1 0 1.9 7 A5 5 0 1 0 11.9 7Z M10 7 A3.1 3.1 0 1 0 3.8 7 A3.1 3.1 0 1 0 10 7Z" fill="url(#gg)"/><circle cx="6.9" cy="7" r="3.1" fill="none" stroke="url(#gr)" stroke-width="0.8"/><path fill-rule="evenodd" d="M12.3 10.5 L12.3 9.2 L13.1 9.2 L13.1 10.5 L13.7 10.8 L14.6 9.7 L15.2 10.3 L14.3 11.3 L14.7 11.9 L16.0 11.6 L16.1 12.4 L14.8 12.6 L14.7 13.3 L15.8 13.9 L15.4 14.6 L14.3 14.0 L13.8 14.4 L14.2 15.6 L13.5 15.9 L13.0 14.7 L12.4 14.7 L11.9 15.9 L11.2 15.6 L11.6 14.4 L11.1 14.0 L10.0 14.6 L9.6 13.9 L10.7 13.3 L10.6 12.6 L9.3 12.4 L9.4 11.6 L10.7 11.9 L11.1 11.3 L10.2 10.3 L10.8 9.7 L11.7 10.8Z M13.95 12.6 A1.25 1.25 0 1 0 11.45 12.6 A1.25 1.25 0 1 0 13.95 12.6Z" fill="#7ba3cc"/><path fill-rule="evenodd" d="M14.9 12.6 A2.2 2.2 0 1 0 10.5 12.6 A2.2 2.2 0 1 0 14.9 12.6Z M13.95 12.6 A1.25 1.25 0 1 0 11.45 12.6 A1.25 1.25 0 1 0 13.95 12.6Z" fill="#a9cbe6"/></svg>
<span class="t" style="left:22.52px;top:210px;line-height:19px;transform:scaleX(0.9725)">SQLWriter</span>
<span class="t" style="left:186.96px;top:210px;line-height:19px;transform:scaleX(0.9044)">1272</span>
<span class="t" style="left:236.58px;top:210px;line-height:19px;transform:scaleX(0.9062)">SQL Server VSS Writer</span>
<span class="t" style="left:433.23px;top:210px;line-height:19px;transform:scaleX(0.9995)">Running</span>
<svg class="g" style="left:5px;top:229px" viewBox="0 0 16 16"><path fill-rule="evenodd" d="M6.0 2.5 L5.9 0.3 L7.9 0.3 L7.8 2.5 L8.4 2.6 L9.4 0.7 L11.1 1.7 L9.9 3.5 L10.4 4.0 L12.2 2.8 L13.2 4.5 L11.3 5.5 L11.4 6.1 L13.6 6.0 L13.6 8.0 L11.4 7.9 L11.3 8.5 L13.2 9.5 L12.2 11.2 L10.4 10.0 L9.9 10.5 L11.1 12.3 L9.4 13.3 L8.4 11.4 L7.8 11.5 L7.9 13.7 L5.9 13.7 L6.0 11.5 L5.4 11.4 L4.4 13.3 L2.7 12.3 L3.9 10.5 L3.4 10.0 L1.6 11.2 L0.6 9.5 L2.5 8.5 L2.4 7.9 L0.2 8.0 L0.2 6.0 L2.4 6.1 L2.5 5.5 L0.6 4.5 L1.6 2.8 L3.4 4.0 L3.9 3.5 L2.7 1.7 L4.4 0.7 L5.4 2.6Z M10 7 A3.1 3.1 0 1 0 3.8 7 A3.1 3.1 0 1 0 10 7Z" fill="#9dbfde"/><path fill-rule="evenodd" d="M11.9 7 A5 5 0 1 0 1.9 7 A5 5 0 1 0 11.9 7Z M10 7 A3.1 3.1 0 1 0 3.8 7 A3.1 3.1 0 1 0 10 7Z" fill="url(#gg)"/><circle cx="6.9" cy="7" r="3.1" fill="none" stroke="url(#gr)" stroke-width="0.8"/><path fill-rule="evenodd" d="M12.3 10.5 L12.3 9.2 L13.1 9.2 L13.1 10.5 L13.7 10.8 L14.6 9.7 L15.2 10.3 L14.3 11.3 L14.7 11.9 L16.0 11.6 L16.1 12.4 L14.8 12.6 L14.7 13.3 L15.8 13.9 L15.4 14.6 L14.3 14.0 L13.8 14.4 L14.2 15.6 L13.5 15.9 L13.0 14.7 L12.4 14.7 L11.9 15.9 L11.2 15.6 L11.6 14.4 L11.1 14.0 L10.0 14.6 L9.6 13.9 L10.7 13.3 L10.6 12.6 L9.3 12.4 L9.4 11.6 L10.7 11.9 L11.1 11.3 L10.2 10.3 L10.8 9.7 L11.7 10.8Z M13.95 12.6 A1.25 1.25 0 1 0 11.45 12.6 A1.25 1.25 0 1 0 13.95 12.6Z" fill="#7ba3cc"/><path fill-rule="evenodd" d="M14.9 12.6 A2.2 2.2 0 1 0 10.5 12.6 A2.2 2.2 0 1 0 14.9 12.6Z M13.95 12.6 A1.25 1.25 0 1 0 11.45 12.6 A1.25 1.25 0 1 0 13.95 12.6Z" fill="#a9cbe6"/></svg>
<span class="t" style="left:22.63px;top:229px;line-height:19px;transform:scaleX(0.8575)">SQLSERVERAGENT</span>
<span class="t" style="left:236.59px;top:229px;line-height:19px;transform:scaleX(0.9030)">SQL Server Agent (MSSQLSERVER)</span>
<span class="t" style="left:433.11px;top:229px;line-height:19px;transform:scaleX(0.9846)">Stopped</span>
<svg class="g" style="left:5px;top:248px" viewBox="0 0 16 16"><path fill-rule="evenodd" d="M6.0 2.5 L5.9 0.3 L7.9 0.3 L7.8 2.5 L8.4 2.6 L9.4 0.7 L11.1 1.7 L9.9 3.5 L10.4 4.0 L12.2 2.8 L13.2 4.5 L11.3 5.5 L11.4 6.1 L13.6 6.0 L13.6 8.0 L11.4 7.9 L11.3 8.5 L13.2 9.5 L12.2 11.2 L10.4 10.0 L9.9 10.5 L11.1 12.3 L9.4 13.3 L8.4 11.4 L7.8 11.5 L7.9 13.7 L5.9 13.7 L6.0 11.5 L5.4 11.4 L4.4 13.3 L2.7 12.3 L3.9 10.5 L3.4 10.0 L1.6 11.2 L0.6 9.5 L2.5 8.5 L2.4 7.9 L0.2 8.0 L0.2 6.0 L2.4 6.1 L2.5 5.5 L0.6 4.5 L1.6 2.8 L3.4 4.0 L3.9 3.5 L2.7 1.7 L4.4 0.7 L5.4 2.6Z M10 7 A3.1 3.1 0 1 0 3.8 7 A3.1 3.1 0 1 0 10 7Z" fill="#9dbfde"/><path fill-rule="evenodd" d="M11.9 7 A5 5 0 1 0 1.9 7 A5 5 0 1 0 11.9 7Z M10 7 A3.1 3.1 0 1 0 3.8 7 A3.1 3.1 0 1 0 10 7Z" fill="url(#gg)"/><circle cx="6.9" cy="7" r="3.1" fill="none" stroke="url(#gr)" stroke-width="0.8"/><path fill-rule="evenodd" d="M12.3 10.5 L12.3 9.2 L13.1 9.2 L13.1 10.5 L13.7 10.8 L14.6 9.7 L15.2 10.3 L14.3 11.3 L14.7 11.9 L16.0 11.6 L16.1 12.4 L14.8 12.6 L14.7 13.3 L15.8 13.9 L15.4 14.6 L14.3 14.0 L13.8 14.4 L14.2 15.6 L13.5 15.9 L13.0 14.7 L12.4 14.7 L11.9 15.9 L11.2 15.6 L11.6 14.4 L11.1 14.0 L10.0 14.6 L9.6 13.9 L10.7 13.3 L10.6 12.6 L9.3 12.4 L9.4 11.6 L10.7 11.9 L11.1 11.3 L10.2 10.3 L10.8 9.7 L11.7 10.8Z M13.95 12.6 A1.25 1.25 0 1 0 11.45 12.6 A1.25 1.25 0 1 0 13.95 12.6Z" fill="#7ba3cc"/><path fill-rule="evenodd" d="M14.9 12.6 A2.2 2.2 0 1 0 10.5 12.6 A2.2 2.2 0 1 0 14.9 12.6Z M13.95 12.6 A1.25 1.25 0 1 0 11.45 12.6 A1.25 1.25 0 1 0 13.95 12.6Z" fill="#a9cbe6"/></svg>
<span class="t" style="left:22.56px;top:248px;line-height:19px;transform:scaleX(0.9330)">SQLBrowser</span>
<span class="t" style="left:236.56px;top:248px;line-height:19px;transform:scaleX(0.9277)">SQL Server Browser</span>
<span class="t" style="left:433.11px;top:248px;line-height:19px;transform:scaleX(0.9846)">Stopped</span>
<svg class="g" style="left:5px;top:267px" viewBox="0 0 16 16"><path fill-rule="evenodd" d="M6.0 2.5 L5.9 0.3 L7.9 0.3 L7.8 2.5 L8.4 2.6 L9.4 0.7 L11.1 1.7 L9.9 3.5 L10.4 4.0 L12.2 2.8 L13.2 4.5 L11.3 5.5 L11.4 6.1 L13.6 6.0 L13.6 8.0 L11.4 7.9 L11.3 8.5 L13.2 9.5 L12.2 11.2 L10.4 10.0 L9.9 10.5 L11.1 12.3 L9.4 13.3 L8.4 11.4 L7.8 11.5 L7.9 13.7 L5.9 13.7 L6.0 11.5 L5.4 11.4 L4.4 13.3 L2.7 12.3 L3.9 10.5 L3.4 10.0 L1.6 11.2 L0.6 9.5 L2.5 8.5 L2.4 7.9 L0.2 8.0 L0.2 6.0 L2.4 6.1 L2.5 5.5 L0.6 4.5 L1.6 2.8 L3.4 4.0 L3.9 3.5 L2.7 1.7 L4.4 0.7 L5.4 2.6Z M10 7 A3.1 3.1 0 1 0 3.8 7 A3.1 3.1 0 1 0 10 7Z" fill="#9dbfde"/><path fill-rule="evenodd" d="M11.9 7 A5 5 0 1 0 1.9 7 A5 5 0 1 0 11.9 7Z M10 7 A3.1 3.1 0 1 0 3.8 7 A3.1 3.1 0 1 0 10 7Z" fill="url(#gg)"/><circle cx="6.9" cy="7" r="3.1" fill="none" stroke="url(#gr)" stroke-width="0.8"/><path fill-rule="evenodd" d="M12.3 10.5 L12.3 9.2 L13.1 9.2 L13.1 10.5 L13.7 10.8 L14.6 9.7 L15.2 10.3 L14.3 11.3 L14.7 11.9 L16.0 11.6 L16.1 12.4 L14.8 12.6 L14.7 13.3 L15.8 13.9 L15.4 14.6 L14.3 14.0 L13.8 14.4 L14.2 15.6 L13.5 15.9 L13.0 14.7 L12.4 14.7 L11.9 15.9 L11.2 15.6 L11.6 14.4 L11.1 14.0 L10.0 14.6 L9.6 13.9 L10.7 13.3 L10.6 12.6 L9.3 12.4 L9.4 11.6 L10.7 11.9 L11.1 11.3 L10.2 10.3 L10.8 9.7 L11.7 10.8Z M13.95 12.6 A1.25 1.25 0 1 0 11.45 12.6 A1.25 1.25 0 1 0 13.95 12.6Z" fill="#7ba3cc"/><path fill-rule="evenodd" d="M14.9 12.6 A2.2 2.2 0 1 0 10.5 12.6 A2.2 2.2 0 1 0 14.9 12.6Z M13.95 12.6 A1.25 1.25 0 1 0 11.45 12.6 A1.25 1.25 0 1 0 13.95 12.6Z" fill="#a9cbe6"/></svg>
<span class="t" style="left:22.98px;top:267px;line-height:19px;transform:scaleX(0.9694)">sppsvc</span>
<span class="t" style="left:236.49px;top:267px;line-height:19px;transform:scaleX(0.9982)">Software Protection</span>
<span class="t" style="left:433.11px;top:267px;line-height:19px;transform:scaleX(0.9846)">Stopped</span>
<svg class="g" style="left:5px;top:286px" viewBox="0 0 16 16"><path fill-rule="evenodd" d="M6.0 2.5 L5.9 0.3 L7.9 0.3 L7.8 2.5 L8.4 2.6 L9.4 0.7 L11.1 1.7 L9.9 3.5 L10.4 4.0 L12.2 2.8 L13.2 4.5 L11.3 5.5 L11.4 6.1 L13.6 6.0 L13.6 8.0 L11.4 7.9 L11.3 8.5 L13.2 9.5 L12.2 11.2 L10.4 10.0 L9.9 10.5 L11.1 12.3 L9.4 13.3 L8.4 11.4 L7.8 11.5 L7.9 13.7 L5.9 13.7 L6.0 11.5 L5.4 11.4 L4.4 13.3 L2.7 12.3 L3.9 10.5 L3.4 10.0 L1.6 11.2 L0.6 9.5 L2.5 8.5 L2.4 7.9 L0.2 8.0 L0.2 6.0 L2.4 6.1 L2.5 5.5 L0.6 4.5 L1.6 2.8 L3.4 4.0 L3.9 3.5 L2.7 1.7 L4.4 0.7 L5.4 2.6Z M10 7 A3.1 3.1 0 1 0 3.8 7 A3.1 3.1 0 1 0 10 7Z" fill="#9dbfde"/><path fill-rule="evenodd" d="M11.9 7 A5 5 0 1 0 1.9 7 A5 5 0 1 0 11.9 7Z M10 7 A3.1 3.1 0 1 0 3.8 7 A3.1 3.1 0 1 0 10 7Z" fill="url(#gg)"/><circle cx="6.9" cy="7" r="3.1" fill="none" stroke="url(#gr)" stroke-width="0.8"/><path fill-rule="evenodd" d="M12.3 10.5 L12.3 9.2 L13.1 9.2 L13.1 10.5 L13.7 10.8 L14.6 9.7 L15.2 10.3 L14.3 11.3 L14.7 11.9 L16.0 11.6 L16.1 12.4 L14.8 12.6 L14.7 13.3 L15.8 13.9 L15.4 14.6 L14.3 14.0 L13.8 14.4 L14.2 15.6 L13.5 15.9 L13.0 14.7 L12.4 14.7 L11.9 15.9 L11.2 15.6 L11.6 14.4 L11.1 14.0 L10.0 14.6 L9.6 13.9 L10.7 13.3 L10.6 12.6 L9.3 12.4 L9.4 11.6 L10.7 11.9 L11.1 11.3 L10.2 10.3 L10.8 9.7 L11.7 10.8Z M13.95 12.6 A1.25 1.25 0 1 0 11.45 12.6 A1.25 1.25 0 1 0 13.95 12.6Z" fill="#7ba3cc"/><path fill-rule="evenodd" d="M14.9 12.6 A2.2 2.2 0 1 0 10.5 12.6 A2.2 2.2 0 1 0 14.9 12.6Z M13.95 12.6 A1.25 1.25 0 1 0 11.45 12.6 A1.25 1.25 0 1 0 13.95 12.6Z" fill="#a9cbe6"/></svg>
<span class="t" style="left:22.50px;top:286px;line-height:19px;transform:scaleX(0.9873)">Spooler</span>
<span class="t" style="left:186.97px;top:286px;line-height:19px;transform:scaleX(0.8960)">1044</span>
<span class="t" style="left:236.64px;top:286px;line-height:19px;transform:scaleX(0.9830)">Print Spooler</span>
<span class="t" style="left:433.23px;top:286px;line-height:19px;transform:scaleX(0.9995)">Running</span>
<svg class="g" style="left:5px;top:305px" viewBox="0 0 16 16"><path fill-rule="evenodd" d="M6.0 2.5 L5.9 0.3 L7.9 0.3 L7.8 2.5 L8.4 2.6 L9.4 0.7 L11.1 1.7 L9.9 3.5 L10.4 4.0 L12.2 2.8 L13.2 4.5 L11.3 5.5 L11.4 6.1 L13.6 6.0 L13.6 8.0 L11.4 7.9 L11.3 8.5 L13.2 9.5 L12.2 11.2 L10.4 10.0 L9.9 10.5 L11.1 12.3 L9.4 13.3 L8.4 11.4 L7.8 11.5 L7.9 13.7 L5.9 13.7 L6.0 11.5 L5.4 11.4 L4.4 13.3 L2.7 12.3 L3.9 10.5 L3.4 10.0 L1.6 11.2 L0.6 9.5 L2.5 8.5 L2.4 7.9 L0.2 8.0 L0.2 6.0 L2.4 6.1 L2.5 5.5 L0.6 4.5 L1.6 2.8 L3.4 4.0 L3.9 3.5 L2.7 1.7 L4.4 0.7 L5.4 2.6Z M10 7 A3.1 3.1 0 1 0 3.8 7 A3.1 3.1 0 1 0 10 7Z" fill="#9dbfde"/><path fill-rule="evenodd" d="M11.9 7 A5 5 0 1 0 1.9 7 A5 5 0 1 0 11.9 7Z M10 7 A3.1 3.1 0 1 0 3.8 7 A3.1 3.1 0 1 0 10 7Z" fill="url(#gg)"/><circle cx="6.9" cy="7" r="3.1" fill="none" stroke="url(#gr)" stroke-width="0.8"/><path fill-rule="evenodd" d="M12.3 10.5 L12.3 9.2 L13.1 9.2 L13.1 10.5 L13.7 10.8 L14.6 9.7 L15.2 10.3 L14.3 11.3 L14.7 11.9 L16.0 11.6 L16.1 12.4 L14.8 12.6 L14.7 13.3 L15.8 13.9 L15.4 14.6 L14.3 14.0 L13.8 14.4 L14.2 15.6 L13.5 15.9 L13.0 14.7 L12.4 14.7 L11.9 15.9 L11.2 15.6 L11.6 14.4 L11.1 14.0 L10.0 14.6 L9.6 13.9 L10.7 13.3 L10.6 12.6 L9.3 12.4 L9.4 11.6 L10.7 11.9 L11.1 11.3 L10.2 10.3 L10.8 9.7 L11.7 10.8Z M13.95 12.6 A1.25 1.25 0 1 0 11.45 12.6 A1.25 1.25 0 1 0 13.95 12.6Z" fill="#7ba3cc"/><path fill-rule="evenodd" d="M14.9 12.6 A2.2 2.2 0 1 0 10.5 12.6 A2.2 2.2 0 1 0 14.9 12.6Z M13.95 12.6 A1.25 1.25 0 1 0 11.45 12.6 A1.25 1.25 0 1 0 13.95 12.6Z" fill="#a9cbe6"/></svg>
<span class="t" style="left:22.57px;top:305px;line-height:19px;transform:scaleX(0.9244)">SNMPTRAP</span>
<span class="t" style="left:236.52px;top:305px;line-height:19px;transform:scaleX(0.9694)">SNMP Trap</span>
<span class="t" style="left:433.11px;top:305px;line-height:19px;transform:scaleX(0.9846)">Stopped</span>
<svg class="g" style="left:5px;top:324px" viewBox="0 0 16 16"><path fill-rule="evenodd" d="M6.0 2.5 L5.9 0.3 L7.9 0.3 L7.8 2.5 L8.4 2.6 L9.4 0.7 L11.1 1.7 L9.9 3.5 L10.4 4.0 L12.2 2.8 L13.2 4.5 L11.3 5.5 L11.4 6.1 L13.6 6.0 L13.6 8.0 L11.4 7.9 L11.3 8.5 L13.2 9.5 L12.2 11.2 L10.4 10.0 L9.9 10.5 L11.1 12.3 L9.4 13.3 L8.4 11.4 L7.8 11.5 L7.9 13.7 L5.9 13.7 L6.0 11.5 L5.4 11.4 L4.4 13.3 L2.7 12.3 L3.9 10.5 L3.4 10.0 L1.6 11.2 L0.6 9.5 L2.5 8.5 L2.4 7.9 L0.2 8.0 L0.2 6.0 L2.4 6.1 L2.5 5.5 L0.6 4.5 L1.6 2.8 L3.4 4.0 L3.9 3.5 L2.7 1.7 L4.4 0.7 L5.4 2.6Z M10 7 A3.1 3.1 0 1 0 3.8 7 A3.1 3.1 0 1 0 10 7Z" fill="#9dbfde"/><path fill-rule="evenodd" d="M11.9 7 A5 5 0 1 0 1.9 7 A5 5 0 1 0 11.9 7Z M10 7 A3.1 3.1 0 1 0 3.8 7 A3.1 3.1 0 1 0 10 7Z" fill="url(#gg)"/><circle cx="6.9" cy="7" r="3.1" fill="none" stroke="url(#gr)" stroke-width="0.8"/><path fill-rule="evenodd" d="M12.3 10.5 L12.3 9.2 L13.1 9.2 L13.1 10.5 L13.7 10.8 L14.6 9.7 L15.2 10.3 L14.3 11.3 L14.7 11.9 L16.0 11.6 L16.1 12.4 L14.8 12.6 L14.7 13.3 L15.8 13.9 L15.4 14.6 L14.3 14.0 L13.8 14.4 L14.2 15.6 L13.5 15.9 L13.0 14.7 L12.4 14.7 L11.9 15.9 L11.2 15.6 L11.6 14.4 L11.1 14.0 L10.0 14.6 L9.6 13.9 L10.7 13.3 L10.6 12.6 L9.3 12.4 L9.4 11.6 L10.7 11.9 L11.1 11.3 L10.2 10.3 L10.8 9.7 L11.7 10.8Z M13.95 12.6 A1.25 1.25 0 1 0 11.45 12.6 A1.25 1.25 0 1 0 13.95 12.6Z" fill="#7ba3cc"/><path fill-rule="evenodd" d="M14.9 12.6 A2.2 2.2 0 1 0 10.5 12.6 A2.2 2.2 0 1 0 14.9 12.6Z M13.95 12.6 A1.25 1.25 0 1 0 11.45 12.6 A1.25 1.25 0 1 0 13.95 12.6Z" fill="#a9cbe6"/></svg>
<span class="t" style="left:22.61px;top:324px;line-height:19px;transform:scaleX(0.8824)">SamSs</span>
<span class="t" style="left:187.08px;top:324px;line-height:19px;transform:scaleX(0.8917)">528</span>
<span class="t" style="left:236.49px;top:324px;line-height:19px;transform:scaleX(0.9953)">Security Accounts Manager</span>
<span class="t" style="left:433.23px;top:324px;line-height:19px;transform:scaleX(0.9995)">Running</span>
<svg class="g" style="left:5px;top:343px" viewBox="0 0 16 16"><path fill-rule="evenodd" d="M6.0 2.5 L5.9 0.3 L7.9 0.3 L7.8 2.5 L8.4 2.6 L9.4 0.7 L11.1 1.7 L9.9 3.5 L10.4 4.0 L12.2 2.8 L13.2 4.5 L11.3 5.5 L11.4 6.1 L13.6 6.0 L13.6 8.0 L11.4 7.9 L11.3 8.5 L13.2 9.5 L12.2 11.2 L10.4 10.0 L9.9 10.5 L11.1 12.3 L9.4 13.3 L8.4 11.4 L7.8 11.5 L7.9 13.7 L5.9 13.7 L6.0 11.5 L5.4 11.4 L4.4 13.3 L2.7 12.3 L3.9 10.5 L3.4 10.0 L1.6 11.2 L0.6 9.5 L2.5 8.5 L2.4 7.9 L0.2 8.0 L0.2 6.0 L2.4 6.1 L2.5 5.5 L0.6 4.5 L1.6 2.8 L3.4 4.0 L3.9 3.5 L2.7 1.7 L4.4 0.7 L5.4 2.6Z M10 7 A3.1 3.1 0 1 0 3.8 7 A3.1 3.1 0 1 0 10 7Z" fill="#9dbfde"/><path fill-rule="evenodd" d="M11.9 7 A5 5 0 1 0 1.9 7 A5 5 0 1 0 11.9 7Z M10 7 A3.1 3.1 0 1 0 3.8 7 A3.1 3.1 0 1 0 10 7Z" fill="url(#gg)"/><circle cx="6.9" cy="7" r="3.1" fill="none" stroke="url(#gr)" stroke-width="0.8"/><path fill-rule="evenodd" d="M12.3 10.5 L12.3 9.2 L13.1 9.2 L13.1 10.5 L13.7 10.8 L14.6 9.7 L15.2 10.3 L14.3 11.3 L14.7 11.9 L16.0 11.6 L16.1 12.4 L14.8 12.6 L14.7 13.3 L15.8 13.9 L15.4 14.6 L14.3 14.0 L13.8 14.4 L14.2 15.6 L13.5 15.9 L13.0 14.7 L12.4 14.7 L11.9 15.9 L11.2 15.6 L11.6 14.4 L11.1 14.0 L10.0 14.6 L9.6 13.9 L10.7 13.3 L10.6 12.6 L9.3 12.4 L9.4 11.6 L10.7 11.9 L11.1 11.3 L10.2 10.3 L10.8 9.7 L11.7 10.8Z M13.95 12.6 A1.25 1.25 0 1 0 11.45 12.6 A1.25 1.25 0 1 0 13.95 12.6Z" fill="#7ba3cc"/><path fill-rule="evenodd" d="M14.9 12.6 A2.2 2.2 0 1 0 10.5 12.6 A2.2 2.2 0 1 0 14.9 12.6Z M13.95 12.6 A1.25 1.25 0 1 0 11.45 12.6 A1.25 1.25 0 1 0 13.95 12.6Z" fill="#a9cbe6"/></svg>
<span class="t" style="left:22.70px;top:343px;line-height:19px;transform:scaleX(0.9144)">RSoPProv</span>
<span class="t" style="left:236.65px;top:343px;line-height:19px;transform:scaleX(0.9730)">Resultant Set of Policy Provider</span>
<span class="t" style="left:433.11px;top:343px;line-height:19px;transform:scaleX(0.9846)">Stopped</span>
<svg class="g" style="left:5px;top:362px" viewBox="0 0 16 16"><path fill-rule="evenodd" d="M6.0 2.5 L5.9 0.3 L7.9 0.3 L7.8 2.5 L8.4 2.6 L9.4 0.7 L11.1 1.7 L9.9 3.5 L10.4 4.0 L12.2 2.8 L13.2 4.5 L11.3 5.5 L11.4 6.1 L13.6 6.0 L13.6 8.0 L11.4 7.9 L11.3 8.5 L13.2 9.5 L12.2 11.2 L10.4 10.0 L9.9 10.5 L11.1 12.3 L9.4 13.3 L8.4 11.4 L7.8 11.5 L7.9 13.7 L5.9 13.7 L6.0 11.5 L5.4 11.4 L4.4 13.3 L2.7 12.3 L3.9 10.5 L3.4 10.0 L1.6 11.2 L0.6 9.5 L2.5 8.5 L2.4 7.9 L0.2 8.0 L0.2 6.0 L2.4 6.1 L2.5 5.5 L0.6 4.5 L1.6 2.8 L3.4 4.0 L3.9 3.5 L2.7 1.7 L4.4 0.7 L5.4 2.6Z M10 7 A3.1 3.1 0 1 0 3.8 7 A3.1 3.1 0 1 0 10 7Z" fill="#9dbfde"/><path fill-rule="evenodd" d="M11.9 7 A5 5 0 1 0 1.9 7 A5 5 0 1 0 11.9 7Z M10 7 A3.1 3.1 0 1 0 3.8 7 A3.1 3.1 0 1 0 10 7Z" fill="url(#gg)"/><circle cx="6.9" cy="7" r="3.1" fill="none" stroke="url(#gr)" stroke-width="0.8"/><path fill-rule="evenodd" d="M12.3 10.5 L12.3 9.2 L13.1 9.2 L13.1 10.5 L13.7 10.8 L14.6 9.7 L15.2 10.3 L14.3 11.3 L14.7 11.9 L16.0 11.6 L16.1 12.4 L14.8 12.6 L14.7 13.3 L15.8 13.9 L15.4 14.6 L14.3 14.0 L13.8 14.4 L14.2 15.6 L13.5 15.9 L13.0 14.7 L12.4 14.7 L11.9 15.9 L11.2 15.6 L11.6 14.4 L11.1 14.0 L10.0 14.6 L9.6 13.9 L10.7 13.3 L10.6 12.6 L9.3 12.4 L9.4 11.6 L10.7 11.9 L11.1 11.3 L10.2 10.3 L10.8 9.7 L11.7 10.8Z M13.95 12.6 A1.25 1.25 0 1 0 11.45 12.6 A1.25 1.25 0 1 0 13.95 12.6Z" fill="#7ba3cc"/><path fill-rule="evenodd" d="M14.9 12.6 A2.2 2.2 0 1 0 10.5 12.6 A2.2 2.2 0 1 0 14.9 12.6Z M13.95 12.6 A1.25 1.25 0 1 0 11.45 12.6 A1.25 1.25 0 1 0 13.95 12.6Z" fill="#a9cbe6"/></svg>
<span class="t" style="left:22.64px;top:362px;line-height:19px;transform:scaleX(0.9841)">RpcLocator</span>
<span class="t" style="left:236.67px;top:362px;line-height:19px;transform:scaleX(0.9555)">Remote Procedure Call (RPC) Lo...</span>
<span class="t" style="left:433.11px;top:362px;line-height:19px;transform:scaleX(0.9846)">Stopped</span>
<svg class="g" style="left:5px;top:381px" viewBox="0 0 16 16"><path fill-rule="evenodd" d="M6.0 2.5 L5.9 0.3 L7.9 0.3 L7.8 2.5 L8.4 2.6 L9.4 0.7 L11.1 1.7 L9.9 3.5 L10.4 4.0 L12.2 2.8 L13.2 4.5 L11.3 5.5 L11.4 6.1 L13.6 6.0 L13.6 8.0 L11.4 7.9 L11.3 8.5 L13.2 9.5 L12.2 11.2 L10.4 10.0 L9.9 10.5 L11.1 12.3 L9.4 13.3 L8.4 11.4 L7.8 11.5 L7.9 13.7 L5.9 13.7 L6.0 11.5 L5.4 11.4 L4.4 13.3 L2.7 12.3 L3.9 10.5 L3.4 10.0 L1.6 11.2 L0.6 9.5 L2.5 8.5 L2.4 7.9 L0.2 8.0 L0.2 6.0 L2.4 6.1 L2.5 5.5 L0.6 4.5 L1.6 2.8 L3.4 4.0 L3.9 3.5 L2.7 1.7 L4.4 0.7 L5.4 2.6Z M10 7 A3.1 3.1 0 1 0 3.8 7 A3.1 3.1 0 1 0 10 7Z" fill="#9dbfde"/><path fill-rule="evenodd" d="M11.9 7 A5 5 0 1 0 1.9 7 A5 5 0 1 0 11.9 7Z M10 7 A3.1 3.1 0 1 0 3.8 7 A3.1 3.1 0 1 0 10 7Z" fill="url(#gg)"/><circle cx="6.9" cy="7" r="3.1" fill="none" stroke="url(#gr)" stroke-width="0.8"/><path fill-rule="evenodd" d="M12.3 10.5 L12.3 9.2 L13.1 9.2 L13.1 10.5 L13.7 10.8 L14.6 9.7 L15.2 10.3 L14.3 11.3 L14.7 11.9 L16.0 11.6 L16.1 12.4 L14.8 12.6 L14.7 13.3 L15.8 13.9 L15.4 14.6 L14.3 14.0 L13.8 14.4 L14.2 15.6 L13.5 15.9 L13.0 14.7 L12.4 14.7 L11.9 15.9 L11.2 15.6 L11.6 14.4 L11.1 14.0 L10.0 14.6 L9.6 13.9 L10.7 13.3 L10.6 12.6 L9.3 12.4 L9.4 11.6 L10.7 11.9 L11.1 11.3 L10.2 10.3 L10.8 9.7 L11.7 10.8Z M13.95 12.6 A1.25 1.25 0 1 0 11.45 12.6 A1.25 1.25 0 1 0 13.95 12.6Z" fill="#7ba3cc"/><path fill-rule="evenodd" d="M14.9 12.6 A2.2 2.2 0 1 0 10.5 12.6 A2.2 2.2 0 1 0 14.9 12.6Z M13.95 12.6 A1.25 1.25 0 1 0 11.45 12.6 A1.25 1.25 0 1 0 13.95 12.6Z" fill="#a9cbe6"/></svg>
<span class="t" style="left:22.64px;top:381px;line-height:19px;transform:scaleX(0.9893)">PerfHost</span>
<span class="t" style="left:236.64px;top:381px;line-height:19px;transform:scaleX(0.9851)">Performance Counter DLL Host</span>
<span class="t" style="left:433.11px;top:381px;line-height:19px;transform:scaleX(0.9846)">Stopped</span>
<svg class="g" style="left:5px;top:400px" viewBox="0 0 16 16"><path fill-rule="evenodd" d="M6.0 2.5 L5.9 0.3 L7.9 0.3 L7.8 2.5 L8.4 2.6 L9.4 0.7 L11.1 1.7 L9.9 3.5 L10.4 4.0 L12.2 2.8 L13.2 4.5 L11.3 5.5 L11.4 6.1 L13.6 6.0 L13.6 8.0 L11.4 7.9 L11.3 8.5 L13.2 9.5 L12.2 11.2 L10.4 10.0 L9.9 10.5 L11.1 12.3 L9.4 13.3 L8.4 11.4 L7.8 11.5 L7.9 13.7 L5.9 13.7 L6.0 11.5 L5.4 11.4 L4.4 13.3 L2.7 12.3 L3.9 10.5 L3.4 10.0 L1.6 11.2 L0.6 9.5 L2.5 8.5 L2.4 7.9 L0.2 8.0 L0.2 6.0 L2.4 6.1 L2.5 5.5 L0.6 4.5 L1.6 2.8 L3.4 4.0 L3.9 3.5 L2.7 1.7 L4.4 0.7 L5.4 2.6Z M10 7 A3.1 3.1 0 1 0 3.8 7 A3.1 3.1 0 1 0 10 7Z" fill="#9dbfde"/><path fill-rule="evenodd" d="M11.9 7 A5 5 0 1 0 1.9 7 A5 5 0 1 0 11.9 7Z M10 7 A3.1 3.1 0 1 0 3.8 7 A3.1 3.1 0 1 0 10 7Z" fill="url(#gg)"/><circle cx="6.9" cy="7" r="3.1" fill="none" stroke="url(#gr)" stroke-width="0.8"/><path fill-rule="evenodd" d="M12.3 10.5 L12.3 9.2 L13.1 9.2 L13.1 10.5 L13.7 10.8 L14.6 9.7 L15.2 10.3 L14.3 11.3 L14.7 11.9 L16.0 11.6 L16.1 12.4 L14.8 12.6 L14.7 13.3 L15.8 13.9 L15.4 14.6 L14.3 14.0 L13.8 14.4 L14.2 15.6 L13.5 15.9 L13.0 14.7 L12.4 14.7 L11.9 15.9 L11.2 15.6 L11.6 14.4 L11.1 14.0 L10.0 14.6 L9.6 13.9 L10.7 13.3 L10.6 12.6 L9.3 12.4 L9.4 11.6 L10.7 11.9 L11.1 11.3 L10.2 10.3 L10.8 9.7 L11.7 10.8Z M13.95 12.6 A1.25 1.25 0 1 0 11.45 12.6 A1.25 1.25 0 1 0 13.95 12.6Z" fill="#7ba3cc"/><path fill-rule="evenodd" d="M14.9 12.6 A2.2 2.2 0 1 0 10.5 12.6 A2.2 2.2 0 1 0 14.9 12.6Z M13.95 12.6 A1.25 1.25 0 1 0 11.45 12.6 A1.25 1.25 0 1 0 13.95 12.6Z" fill="#a9cbe6"/></svg>
<span class="t" style="left:22.62px;top:400px;line-height:19px;transform:scaleX(1.0119)">NetTcpPortSharing</span>
<span class="t" style="left:236.65px;top:400px;line-height:19px;transform:scaleX(0.9789)">Net.Tcp Port Sharing Service</span>
<span class="t" style="left:433.11px;top:400px;line-height:19px;transform:scaleX(0.9846)">Stopped</span>
<svg class="g" style="left:5px;top:419px" viewBox="0 0 16 16"><path fill-rule="evenodd" d="M6.0 2.5 L5.9 0.3 L7.9 0.3 L7.8 2.5 L8.4 2.6 L9.4 0.7 L11.1 1.7 L9.9 3.5 L10.4 4.0 L12.2 2.8 L13.2 4.5 L11.3 5.5 L11.4 6.1 L13.6 6.0 L13.6 8.0 L11.4 7.9 L11.3 8.5 L13.2 9.5 L12.2 11.2 L10.4 10.0 L9.9 10.5 L11.1 12.3 L9.4 13.3 L8.4 11.4 L7.8 11.5 L7.9 13.7 L5.9 13.7 L6.0 11.5 L5.4 11.4 L4.4 13.3 L2.7 12.3 L3.9 10.5 L3.4 10.0 L1.6 11.2 L0.6 9.5 L2.5 8.5 L2.4 7.9 L0.2 8.0 L0.2 6.0 L2.4 6.1 L2.5 5.5 L0.6 4.5 L1.6 2.8 L3.4 4.0 L3.9 3.5 L2.7 1.7 L4.4 0.7 L5.4 2.6Z M10 7 A3.1 3.1 0 1 0 3.8 7 A3.1 3.1 0 1 0 10 7Z" fill="#9dbfde"/><path fill-rule="evenodd" d="M11.9 7 A5 5 0 1 0 1.9 7 A5 5 0 1 0 11.9 7Z M10 7 A3.1 3.1 0 1 0 3.8 7 A3.1 3.1 0 1 0 10 7Z" fill="url(#gg)"/><circle cx="6.9" cy="7" r="3.1" fill="none" stroke="url(#gr)" stroke-width="0.8"/><path fill-rule="evenodd" d="M12.3 10.5 L12.3 9.2 L13.1 9.2 L13.1 10.5 L13.7 10.8 L14.6 9.7 L15.2 10.3 L14.3 11.3 L14.7 11.9 L16.0 11.6 L16.1 12.4 L14.8 12.6 L14.7 13.3 L15.8 13.9 L15.4 14.6 L14.3 14.0 L13.8 14.4 L14.2 15.6 L13.5 15.9 L13.0 14.7 L12.4 14.7 L11.9 15.9 L11.2 15.6 L11.6 14.4 L11.1 14.0 L10.0 14.6 L9.6 13.9 L10.7 13.3 L10.6 12.6 L9.3 12.4 L9.4 11.6 L10.7 11.9 L11.1 11.3 L10.2 10.3 L10.8 9.7 L11.7 10.8Z M13.95 12.6 A1.25 1.25 0 1 0 11.45 12.6 A1.25 1.25 0 1 0 13.95 12.6Z" fill="#7ba3cc"/><path fill-rule="evenodd" d="M14.9 12.6 A2.2 2.2 0 1 0 10.5 12.6 A2.2 2.2 0 1 0 14.9 12.6Z M13.95 12.6 A1.25 1.25 0 1 0 11.45 12.6 A1.25 1.25 0 1 0 13.95 12.6Z" fill="#a9cbe6"/></svg>
<span class="t" style="left:22.58px;top:419px;line-height:19px;transform:scaleX(1.0568)">Netlogon</span>
<span class="t" style="left:187.08px;top:419px;line-height:19px;transform:scaleX(0.8917)">528</span>
<span class="t" style="left:236.58px;top:419px;line-height:19px;transform:scaleX(1.0547)">Netlogon</span>
<span class="t" style="left:433.23px;top:419px;line-height:19px;transform:scaleX(0.9995)">Running</span>
</div>
<div class="a" style="left:635px;top:89px;width:17px;height:454px;background:#fff;border-left:1px solid #d2d2d2;border-right:1px solid #c4c4c4"></div>
<svg class="a" style="left:639px;top:95px" width="9" height="7" viewBox="0 0 9 7"><path d="M1.3 5.6 L4.5 2.1 L7.7 5.6" fill="none" stroke="#606060" stroke-width="1.4"/></svg>
<div class="a" style="left:635px;top:106px;width:17px;height:62px;background:#dcdcdc;border:1px solid #a6a6a6"></div>
<div class="a" style="left:640px;top:133px;width:7px;height:2px;background:#707070"></div>
<div class="a" style="left:640px;top:136px;width:7px;height:2px;background:#707070"></div>
<div class="a" style="left:640px;top:139px;width:7px;height:2px;background:#707070"></div>
<div class="a" style="left:636px;top:526px;width:15px;height:1px;background:#c4c4c4"></div>
<svg class="a" style="left:639px;top:530px" width="9" height="8" viewBox="0 0 9 8"><path d="M1.3 2.3 L4.5 5.9 L7.7 2.3" fill="none" stroke="#606060" stroke-width="1.4"/></svg>

<svg class="a" style="left:15px;top:557px" width="21" height="21" viewBox="0 0 21 21"><circle cx="10.5" cy="10.5" r="8.9" fill="#fff" stroke="#2b2b2b" stroke-width="1.2"/><path d="M7 12 L10.6 8.4 L14.2 12" fill="none" stroke="#1e1e1e" stroke-width="2"/></svg>
<span class="t" style="left:42.17px;top:560px;line-height:17px;transform:scaleX(0.9486);">Fewer <u>d</u>etails</span>
<div class="a" style="left:118px;top:561px;width:1px;height:13px;background:#c8c8c8"></div>
<svg class="a" style="left:127px;top:559px;width:16px;height:16px" viewBox="0 0 16 16"><path fill-rule="evenodd" d="M6.0 2.5 L5.9 0.3 L7.9 0.3 L7.8 2.5 L8.4 2.6 L9.4 0.7 L11.1 1.7 L9.9 3.5 L10.4 4.0 L12.2 2.8 L13.2 4.5 L11.3 5.5 L11.4 6.1 L13.6 6.0 L13.6 8.0 L11.4 7.9 L11.3 8.5 L13.2 9.5 L12.2 11.2 L10.4 10.0 L9.9 10.5 L11.1 12.3 L9.4 13.3 L8.4 11.4 L7.8 11.5 L7.9 13.7 L5.9 13.7 L6.0 11.5 L5.4 11.4 L4.4 13.3 L2.7 12.3 L3.9 10.5 L3.4 10.0 L1.6 11.2 L0.6 9.5 L2.5 8.5 L2.4 7.9 L0.2 8.0 L0.2 6.0 L2.4 6.1 L2.5 5.5 L0.6 4.5 L1.6 2.8 L3.4 4.0 L3.9 3.5 L2.7 1.7 L4.4 0.7 L5.4 2.6Z M10 7 A3.1 3.1 0 1 0 3.8 7 A3.1 3.1 0 1 0 10 7Z" fill="#9dbfde"/><path fill-rule="evenodd" d="M11.9 7 A5 5 0 1 0 1.9 7 A5 5 0 1 0 11.9 7Z M10 7 A3.1 3.1 0 1 0 3.8 7 A3.1 3.1 0 1 0 10 7Z" fill="url(#gg)"/><circle cx="6.9" cy="7" r="3.1" fill="none" stroke="url(#gr)" stroke-width="0.8"/><path fill-rule="evenodd" d="M12.3 10.5 L12.3 9.2 L13.1 9.2 L13.1 10.5 L13.7 10.8 L14.6 9.7 L15.2 10.3 L14.3 11.3 L14.7 11.9 L16.0 11.6 L16.1 12.4 L14.8 12.6 L14.7 13.3 L15.8 13.9 L15.4 14.6 L14.3 14.0 L13.8 14.4 L14.2 15.6 L13.5 15.9 L13.0 14.7 L12.4 14.7 L11.9 15.9 L11.2 15.6 L11.6 14.4 L11.1 14.0 L10.0 14.6 L9.6 13.9 L10.7 13.3 L10.6 12.6 L9.3 12.4 L9.4 11.6 L10.7 11.9 L11.1 11.3 L10.2 10.3 L10.8 9.7 L11.7 10.8Z M13.95 12.6 A1.25 1.25 0 1 0 11.45 12.6 A1.25 1.25 0 1 0 13.95 12.6Z" fill="#7ba3cc"/><path fill-rule="evenodd" d="M14.9 12.6 A2.2 2.2 0 1 0 10.5 12.6 A2.2 2.2 0 1 0 14.9 12.6Z M13.95 12.6 A1.25 1.25 0 1 0 11.45 12.6 A1.25 1.25 0 1 0 13.95 12.6Z" fill="#a9cbe6"/></svg>
<span class="t" style="left:148.00px;top:560px;line-height:17px;transform:scaleX(0.9296);color:#1463d0">Open Services</span>
<svg class="a" style="left:369px;top:133.6px;z-index:9" width="14" height="23" viewBox="0 0 14 23"><path d="M0.5 1 L0.5 16 L4 12.8 L7.3 20.3 L9.9 19.2 L6.8 11.8 L11.1 11.8Z" fill="#fff" stroke="#000" stroke-width="1.1" stroke-linejoin="miter"/></svg>
</body></html>
